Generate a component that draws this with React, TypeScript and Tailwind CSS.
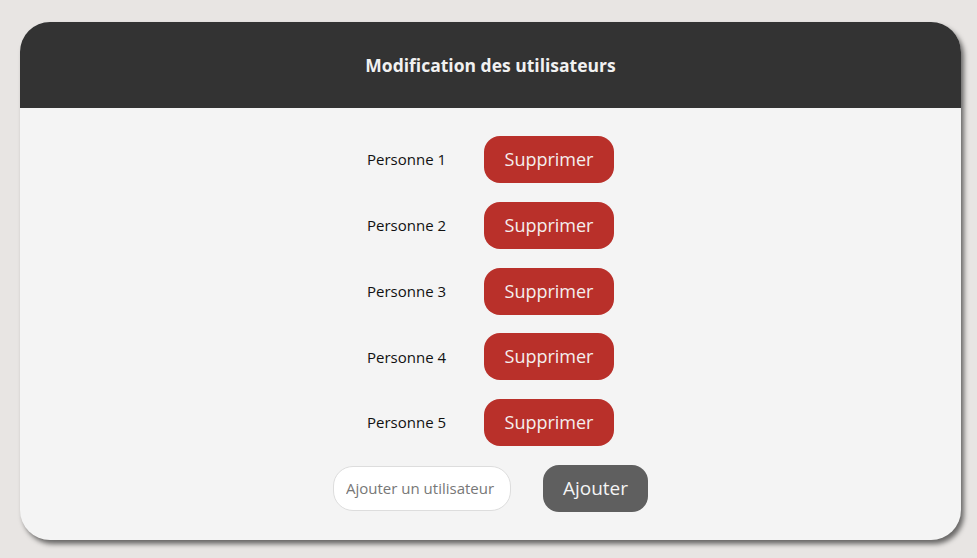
const users = ['Personne 1', 'Personne 2', 'Personne 3', 'Personne 4', 'Personne 5']

export default function App() {
  return (
    <div
      className="min-h-screen bg-[#e8e5e3] pl-5 pt-[22px]"
      style={{ fontFamily: '"Open Sans", "Noto Sans", sans-serif' }}
    >
      <div className="h-[518px] w-[941px] overflow-hidden rounded-[30px] bg-[#f4f4f4] shadow-[3px_4px_5px_rgba(0,0,0,0.55)]">
        {/* Header */}
        <div className="flex h-[86px] items-center justify-center bg-[#333333]">
          <h1 className="text-[17.5px] font-bold text-[#f1f1f1]">Modification des utilisateurs</h1>
        </div>

        {/* User list */}
        <div className="flex flex-col items-center gap-[18.75px] pt-[28px]">
          {users.map((name) => (
            <div key={name} className="flex h-[47px] items-center gap-[37px]">
              <span className="w-[80px] whitespace-nowrap text-[15px] text-[#111]">{name}</span>
              <button className="h-[47px] w-[130px] rounded-[16px] bg-[#b9302a] text-[18px] text-[#f4eeee]">
                Supprimer
              </button>
            </div>
          ))}

          <div className="flex h-[47px] items-center gap-[32px]">
            <input
              placeholder="Ajouter un utilisateur"
              className="h-[45px] w-[178px] rounded-[20px] border border-[#dddddd] bg-white px-3 text-[15px] text-[#333] outline-none placeholder:text-[#777]"
            />
            <button className="h-[47px] w-[105px] rounded-[16px] bg-[#5f5f5f] text-[19px] text-[#f4f4f4]">
              Ajouter
            </button>
          </div>
        </div>
      </div>
    </div>
  )
}
